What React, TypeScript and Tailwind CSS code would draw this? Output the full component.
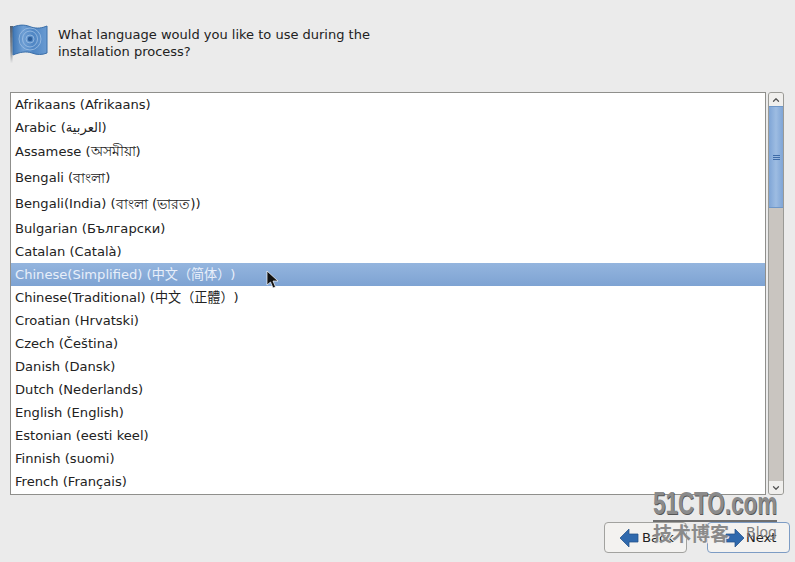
import { ChevronDown, ChevronUp } from 'lucide-react';

const LANGUAGES = [
  { name: 'Afrikaans', native: 'Afrikaans', height: 'h-[23px]' },
  { name: 'Arabic', native: 'العربية', height: 'h-[23px]' },
  { name: 'Assamese', native: 'অসমীয়া', height: 'h-[25px]', wide: true },
  { name: 'Bengali', native: 'বাংলা', height: 'h-[26px] pt-[2px]', wide: true },
  { name: 'Bengali(India)', native: 'বাংলা (ভারত)', height: 'h-[26px] pt-[2px]', wide: true },
  { name: 'Bulgarian', native: 'Български', height: 'h-[24px] pt-[2px]' },
  { name: 'Catalan', native: 'Català', height: 'h-[23px]' },
  { name: 'Chinese(Simplified)', native: '中文（简体）', height: 'h-[23px]', selected: true },
  { name: 'Chinese(Traditional)', native: '中文（正體）', height: 'h-[23px]' },
  { name: 'Croatian', native: 'Hrvatski', height: 'h-[23px]' },
  { name: 'Czech', native: 'Čeština', height: 'h-[23px]' },
  { name: 'Danish', native: 'Dansk', height: 'h-[23px]' },
  { name: 'Dutch', native: 'Nederlands', height: 'h-[23px]' },
  { name: 'English', native: 'English', height: 'h-[23px]' },
  { name: 'Estonian', native: 'eesti keel', height: 'h-[23px]' },
  { name: 'Finnish', native: 'suomi', height: 'h-[23px]' },
  { name: 'French', native: 'Français', height: 'h-[23px]' },
];

function Flag() {
  return (
    <svg width="40" height="40" viewBox="0 0 40 40" className="shrink-0">
      <defs>
        <linearGradient id="flagFill" x1="0" y1="0" x2="1" y2="0">
          <stop offset="0" stopColor="#3f78b8" />
          <stop offset="0.3" stopColor="#6f9fd4" />
          <stop offset="0.6" stopColor="#4f86c4" />
          <stop offset="1" stopColor="#6a9bd2" />
        </linearGradient>
        <linearGradient id="poleFill" x1="0" y1="0" x2="0" y2="1">
          <stop offset="0" stopColor="#556070" />
          <stop offset="0.7" stopColor="#8a8f94" />
          <stop offset="1" stopColor="#e8e8e8" />
        </linearGradient>
      </defs>
      <path d="M1 2 L4 2 L3.5 39 L1.5 39 Z" fill="url(#poleFill)" />
      <path
        d="M4 3 C12 0 17 1 22 3 C28 5 33 4 38 2 L38 29 C33 31 28 31 23 29 C17 27 11 28 4 31 Z"
        fill="url(#flagFill)"
        stroke="#3a6ea8"
        strokeWidth="1"
      />
      <g fill="none" stroke="#a9c8ea" strokeWidth="1" opacity="0.7">
        <ellipse cx="21" cy="15" rx="4" ry="4" />
        <ellipse cx="21" cy="15" rx="7.5" ry="8" />
        <ellipse cx="21" cy="15" rx="11" ry="11" />
      </g>
      <circle cx="21" cy="15" r="2.2" fill="#2f5f9a" />
    </svg>
  );
}

function ArrowIcon({ right = false }: { right?: boolean }) {
  return (
    <svg width="20" height="20" viewBox="0 0 20 20" className="shrink-0">
      <path
        d={right ? 'M1 6 H10 V1 L19 10 L10 19 V14 H1 Z' : 'M19 6 H10 V1 L1 10 L10 19 V14 H19 Z'}
        fill="#2f69ad"
        stroke="#23518a"
        strokeWidth="0.75"
      />
    </svg>
  );
}

function Scrollbar() {
  return (
    <div className="w-[16px] flex flex-col bg-[#c9c5c0] border border-[#9a9a96] rounded-[3px] overflow-hidden">
      <div className="h-[13px] bg-[#f0efed] flex items-center justify-center">
        <ChevronUp size={10} strokeWidth={3} className="text-[#555]" />
      </div>
      <div className="h-[102px] bg-gradient-to-r from-[#7fa5d6] via-[#9dbce2] to-[#7fa5d6] border-y border-[#6f97c8] flex flex-col items-center justify-center gap-[1px]">
        <div className="w-[7px] h-px bg-[#3f6ca8]" />
        <div className="w-[7px] h-px bg-[#3f6ca8]" />
        <div className="w-[7px] h-px bg-[#3f6ca8]" />
      </div>
      <div className="flex-1" />
      <div className="h-[13px] bg-[#f0efed] flex items-center justify-center">
        <ChevronDown size={10} strokeWidth={3} className="text-[#555]" />
      </div>
    </div>
  );
}

export default function App() {
  return (
    <div
      className="relative w-[795px] h-[562px] overflow-hidden bg-[#ebebeb] text-[#222] text-[13.1px]"
      style={{ fontFamily: '"DejaVu Sans", "Noto Sans CJK SC", sans-serif' }}
    >
      {/* Header */}
      <div className="h-[92px] pl-[9px] pt-[24px] flex items-start gap-[9px]">
        <Flag />
        <p className="w-[330px] text-[13px] leading-[17px] mt-[2px]">
          What language would you like to use during the installation process?
        </p>
      </div>

      {/* List */}
      <div className="h-[403px] pl-[10px] pr-[11px] flex gap-[2px]">
        <div className="w-[757px] bg-white border border-[#8f8f8c] overflow-hidden">
          {LANGUAGES.map((lang) => (
            <div
              key={lang.name}
              className={`${lang.height} pl-[4px] flex items-center whitespace-pre ${
                lang.selected ? 'bg-gradient-to-b from-[#94b5de] to-[#7ea3d3] text-[#e8effa]' : ''
              }`}
            >
              {lang.name} (<span className={lang.wide ? 'text-[13.6px]' : ''}>{lang.native}</span>)
            </div>
          ))}
        </div>
        <Scrollbar />
      </div>

      {/* Buttons */}
      <div className="mt-[27px] pl-[604px] flex gap-[20px]">
        <button className="w-[83px] h-[31px] bg-[#f3f2f0] border border-[#a2a29f] rounded-[4px] flex items-center pl-[14px] gap-[3px]">
          <ArrowIcon />
          <span>Back</span>
        </button>
        <button className="w-[83px] h-[31px] bg-[#f3f2f0] border border-[#7d9cc4] rounded-[4px] flex items-center pl-[17px] gap-[1px]">
          <ArrowIcon right />
          <span>Next</span>
        </button>
      </div>

      {/* Cursor */}
      <svg width="14" height="20" viewBox="0 0 14 20" className="absolute left-[266px] top-[270px]">
        <path d="M1 1 L1 15 L4.5 12 L7 18 L9.5 17 L7 11 L12 11 Z" fill="#111" stroke="#fff" strokeWidth="0.7" />
      </svg>

      {/* Watermark */}
      <div className="absolute left-[653px] top-[485px] w-[124px] pointer-events-none">
        <div
          className="origin-left scale-x-[0.7] text-[32px] leading-[36px] font-bold text-[#8b8b8b] whitespace-nowrap"
          style={{ fontFamily: '"Liberation Sans", sans-serif', textShadow: '1px 1px 0 #555' }}
        >
          51CTO.com
        </div>
        <div className="h-[2px] bg-[#6f6f6f] -mt-[1px]" />
        <div className="flex items-start justify-between">
          <span
            className="text-[19px] leading-[24px] font-bold text-[#8a8a8a] whitespace-nowrap"
            style={{ textShadow: '1px 1px 0 #eee' }}
          >
            技术博客
          </span>
          <span className="text-[14px] leading-[20px] text-[#7e7e7e] -ml-[2px]">Blog</span>
        </div>
      </div>
    </div>
  );
}
